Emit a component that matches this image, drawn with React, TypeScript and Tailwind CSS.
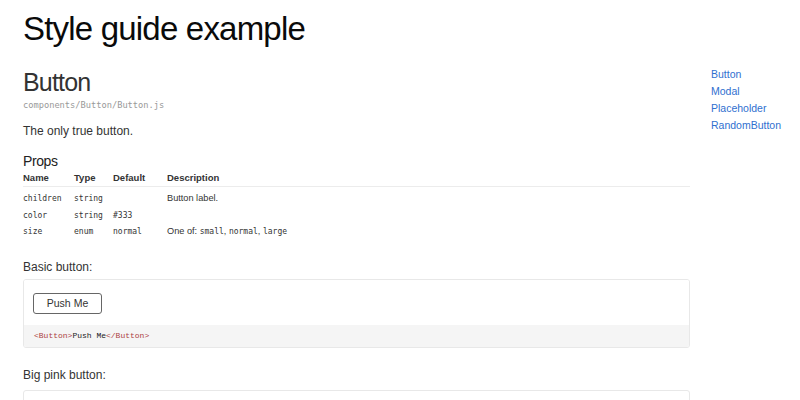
import React from "react";

const sans = { fontFamily: '"Liberation Sans", Arial, sans-serif' };
const mono = { fontFamily: '"DejaVu Sans Mono", monospace' };

export default function App() {
  return (
    <div className="flex w-[800px] h-[400px] overflow-hidden bg-white" style={sans}>
      <main className="w-[690px] pl-[23px] shrink-0">
        <h1 className="pt-[12px] text-[33px] leading-[33px] tracking-[-0.8px] text-[#0a0a0a]">Style guide example</h1>
        <h2 className="mt-[25px] text-[25px] leading-[25px] tracking-[-0.8px] text-[#333]">Button</h2>
        <div className="mt-[4px] text-[8.7px] leading-[12px] text-[#999]" style={mono}>
          components/Button/Button.js
        </div>
        <p className="mt-[12px] text-[12px] leading-[16px] text-[#333]">The only true button.</p>
        <h3 className="mt-[13px] text-[14px] leading-[18px] tracking-[-0.4px] text-[#222]">Props</h3>
        <div className="text-[#333]">
          <div className="grid grid-cols-[51px_39px_54px_1fr] h-[17px] items-center border-b border-[#ececec] text-[9.5px] font-bold">
            <div>Name</div>
            <div>Type</div>
            <div>Default</div>
            <div>Description</div>
          </div>
          <div className="pt-[4px]">
            {[
              ["children", "string", "", "Button label."],
              ["color", "string", "#333", ""],
              ["size", "enum", "normal", "desc"],
            ].map((r) => (
              <div key={r[0]} className="grid grid-cols-[51px_39px_54px_1fr] h-[16.5px] items-center text-[9.2px]">
                <div className="text-[8px]" style={mono}>{r[0]}</div>
                <div className="text-[8px]" style={mono}>{r[1]}</div>
                <div className="text-[8px]" style={mono}>{r[2]}</div>
                <div>
                  {r[3] === "desc" ? (
                    <span>
                      One of: <span className="text-[8px]" style={mono}>small</span>,{" "}
                      <span className="text-[8px]" style={mono}>normal</span>,{" "}
                      <span className="text-[8px]" style={mono}>large</span>
                    </span>
                  ) : (
                    r[3]
                  )}
                </div>
              </div>
            ))}
          </div>
        </div>
        <p className="mt-[18px] text-[12px] leading-[16px] text-[#333]">Basic button:</p>
        <div className="mt-[4px] border border-[#e8e8e8] rounded-[3px] overflow-hidden">
          <div className="pt-[10px] pb-[11px] pl-[9px] bg-white">
            <button className="w-[69px] h-[21px] border border-[#666] rounded-[3px] text-[10.5px] text-[#333] bg-white" style={sans}>
              Push Me
            </button>
          </div>
          <div className="h-[22px] flex items-center pl-[10px] bg-[#f5f5f5] text-[8px]" style={{ fontFamily: '"Liberation Mono", "Courier New", monospace' }}>
            <span className="text-[#ac4142]">&lt;Button&gt;</span>
            <span className="text-[#222]">Push Me</span>
            <span className="text-[#ac4142]">&lt;/Button&gt;</span>
          </div>
        </div>
        <p className="mt-[19px] text-[12px] leading-[16px] text-[#333]">Big pink button:</p>
        <div className="mt-[7px] h-[60px] border border-[#e8e8e8] rounded-[3px]"></div>
      </main>
      <nav className="pl-[21px] pt-[66px] flex flex-col text-[10.5px] leading-[17px] text-[#2f6fcf]">
        <a>Button</a>
        <a>Modal</a>
        <a>Placeholder</a>
        <a>RandomButton</a>
      </nav>
    </div>
  );
}
